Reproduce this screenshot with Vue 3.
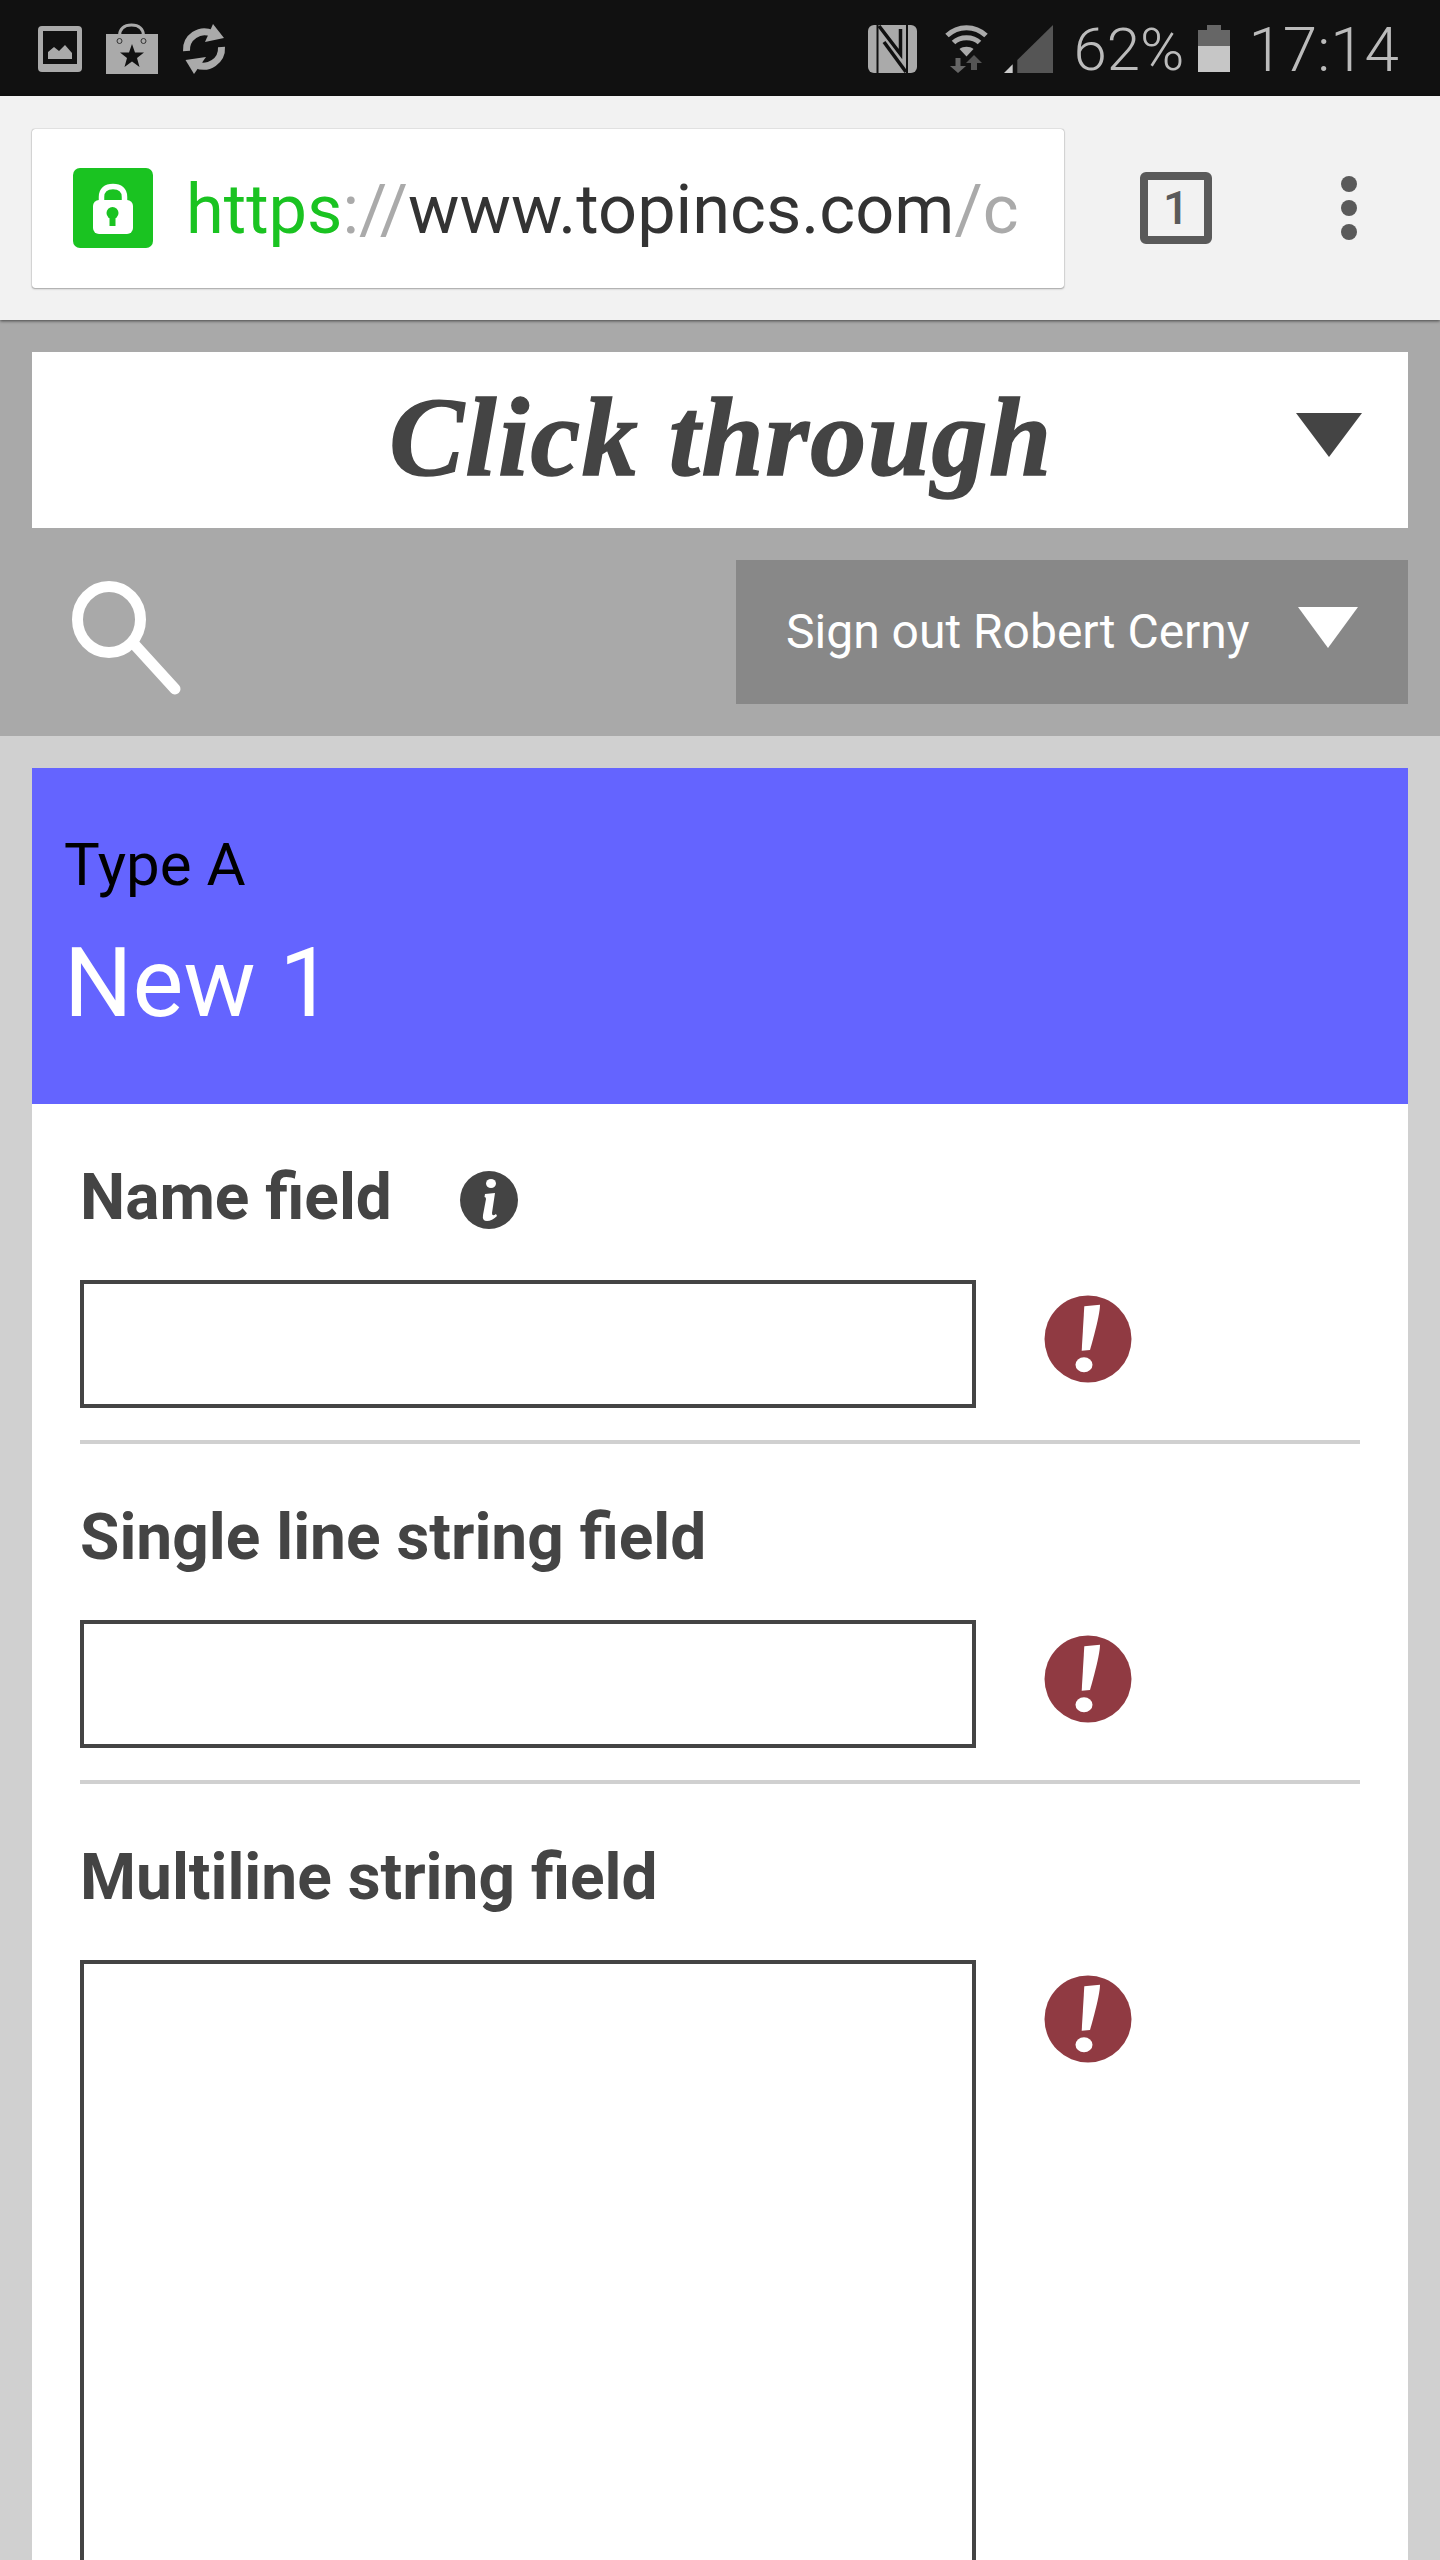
<template>
  <div class="page">
    <div class="statusbar">
      <svg class="st-image" width="44" height="46" viewBox="0 0 44 46">
        <path fill="#aaa" fill-rule="evenodd" d="M4 0H40a4 4 0 0 1 4 4V42a4 4 0 0 1-4 4H4a4 4 0 0 1-4-4V4a4 4 0 0 1 4-4ZM5 5V38H39V5Z" />
        <path fill="#aaa" d="M10 33V26L16 21L21 25L27 19L34 27V33Z" />
      </svg>
      <svg class="st-bag" width="52" height="52" viewBox="0 0 52 52">
        <rect x="0" y="11" width="52" height="40" fill="#aaa" />
        <path d="M13.500 18V13C13.500 6 18 2 25.500 2S37.500 6 37.500 13V18" fill="none" stroke="#aaa" stroke-width="3" />
        <circle cx="13.500" cy="18" r="2.500" fill="#aaa" stroke="#333" stroke-width="1" />
        <circle cx="37.500" cy="18" r="2.500" fill="#aaa" stroke="#333" stroke-width="1" />
        <path fill="#111" d="M26 21L29 29.500H38L31 35L33.500 44L26 38.500L18.500 44L21 35L14 29.500H23Z" />
      </svg>
      <svg class="st-sync" width="44" height="50" viewBox="0 0 44 50">
        <path d="M30 9.500A18 18 0 0 0 4.500 27" fill="none" stroke="#aaa" stroke-width="7" />
        <path d="M14 40.500A18 18 0 0 0 39.500 23" fill="none" stroke="#aaa" stroke-width="7" />
        <path fill="#aaa" d="M31 0L42 14L23 18Z" />
        <path fill="#aaa" d="M3.500 36L24 33L12 50Z" />
      </svg>
      <svg class="st-nfc" width="49" height="48" viewBox="0 0 49 48">
        <rect width="49" height="48" rx="6" fill="#aaa" />
        <path d="M9.500 0V48" stroke="#111" stroke-width="2" />
        <path d="M39 0V48" stroke="#111" stroke-width="2" />
        <path d="M11 1L32.500 29V4" fill="none" stroke="#111" stroke-width="3.500" />
        <path d="M16 17L38 47" fill="none" stroke="#111" stroke-width="3.500" />
      </svg>
      <svg class="st-wifi" width="43" height="49" viewBox="0 0 43 49">
        <path d="M2 11.500C13 1 30 1 41 11.500" fill="none" stroke="#aaa" stroke-width="5" />
        <path d="M8.500 18.500C15 12 28 12 34.500 18.500" fill="none" stroke="#aaa" stroke-width="5" />
        <path fill="#aaa" d="M14.500 25C18 22 25 22 28.500 25L21.500 32.500Z" />
        <path fill="#666" d="M10.500 34H15.500V42H21L13 49L5 42H10.500Z" />
        <path fill="#555" d="M29 31L37 39H32V46H26V39H21Z" />
      </svg>
      <svg class="st-signal" width="49" height="48" viewBox="0 0 49 48">
        <path fill="#ccc" d="M0 48L8.700 39.300V48Z" />
        <path fill="#555" d="M13.300 35L49 0V48H13.300Z" />
      </svg>
      <span class="st-pct">62%</span>
      <svg class="st-batt" width="32" height="47" viewBox="0 0 32 47">
        <rect x="9" width="14" height="6" fill="#666" />
        <rect y="5" width="32" height="16" fill="#666" />
        <rect y="21" width="32" height="26" fill="#c6c6c6" />
      </svg>
      <span class="st-time">17:14</span>
    </div>

    <div class="toolbar">
      <div class="urlbox">
        <svg class="lock" width="80" height="80" viewBox="0 0 80 80">
          <rect width="80" height="80" rx="7" fill="#1ac321" />
          <path d="M28.500 36V29C28.500 22 33 18.500 40 18.500S51.500 22 51.500 29V36" fill="none" stroke="#fff" stroke-width="5.500" />
          <rect x="20" y="32" width="40" height="34" rx="6" fill="#fff" />
          <circle cx="39.500" cy="45" r="6" fill="#1ac321" />
          <rect x="36.500" y="46" width="6" height="12" fill="#1ac321" />
        </svg>
        <div class="url"><span class="scheme">https</span><span class="dim">://</span><span class="host">www.topincs.com</span><span class="dim">/c</span></div>
      </div>
      <div class="tabs">1</div>
      <div class="dots"><i></i><i></i><i></i></div>
    </div>

    <div class="header">
      <div class="titlebar">
        <span class="title">Click through</span>
        <span class="tri dark"></span>
      </div>
      <div class="tools">
        <svg class="search" width="114" height="120" viewBox="0 0 114 120">
          <ellipse cx="39" cy="41.500" rx="31.500" ry="33" fill="none" stroke="#fff" stroke-width="11" />
          <path d="M64 66L105 111" fill="none" stroke="#fff" stroke-width="11" stroke-linecap="round" />
        </svg>
        <div class="signout">
          <span>Sign out Robert Cerny</span>
          <span class="tri light"></span>
        </div>
      </div>
    </div>

    <div class="content">
      <div class="card">
        <div class="card-head">
          <div class="type">Type A</div>
          <div class="name">New 1</div>
        </div>
        <div class="card-body">
          <div v-for="f in fields" :key="f.label" class="field" :class="{ multi: f.multi }">
            <div class="label">
              {{ f.label }}
              <svg v-if="f.info" class="info" width="58" height="58" viewBox="0 0 58 58">
                <circle cx="29" cy="29" r="29" fill="#444" />
                <ellipse cx="31" cy="12.500" rx="5" ry="4.500" fill="#fff" />
                <path fill="#fff" d="M25 23L35 22L32 42Q32 46 36 43L37 45Q32 50 27 50Q22 50 23 44L26 28Q26 26 24.500 26Z" />
              </svg>
            </div>
            <div class="row">
              <div class="input"></div>
              <svg class="error" width="88" height="88" viewBox="0 0 88 88">
                <circle cx="44" cy="44" r="43.500" fill="#903a42" />
                <path fill="#fff" d="M40.300 11.300L56 9.700Q56 20 46 55L37.700 55.700Z" />
                <ellipse cx="40" cy="69.700" rx="8.500" ry="7.500" fill="#fff" />
              </svg>
            </div>
          </div>
        </div>
      </div>
    </div>
  </div>
</template>

<script setup>
const fields = [
  { label: 'Name field', info: true },
  { label: 'Single line string field' },
  { label: 'Multiline string field', multi: true }
]
</script>

<style>
body {
  background: #d0d0d0;
}
</style>

<style scoped>
.page {
  width: 1440px;
  height: 2560px;
  overflow: hidden;
  background: #d0d0d0;
  font-family: Roboto, "Liberation Sans", sans-serif;
}

.statusbar {
  height: 96px;
  background: #111;
  display: flex;
  align-items: flex-start;
  color: #bbb;
  font-weight: 300;
}

.st-image { margin: 26px 0 0 38px; }
.st-bag { margin: 23px 0 0 24px; }
.st-sync { margin: 24px 0 0 24px; }
.st-nfc { margin: 25px 0 0 auto; }
.st-wifi { margin: 24px 0 0 28px; }
.st-signal { margin: 25px 0 0 16px; }
.st-batt { margin: 25px 0 0 14px; }

.st-pct,
.st-time {
  line-height: 96px;
  margin-top: 2px;
}

.st-pct {
  margin-left: 20px;
  font-size: 60px;
}

.st-time {
  margin: 2px 41px 0 18px;
  font-size: 62px;
}

.toolbar {
  height: 224px;
  background: #f2f2f2;
  display: flex;
  align-items: center;
  position: relative;
  box-shadow: 0 1px 3px rgba(0, 0, 0, 0.6);
}

.urlbox {
  width: 1032px;
  height: 159px;
  box-sizing: border-box;
  margin-left: 32px;
  background: #fff;
  border-radius: 3px;
  box-shadow: 0 0 1px rgba(0, 0, 0, 0.5), 0 1px 2px rgba(0, 0, 0, 0.3);
  display: flex;
  align-items: center;
  padding-left: 41px;
}

.lock { flex: none; }

.url {
  margin: 2px 0 0 33px;
  font-size: 68.5px;
  white-space: nowrap;
  color: #333;
}

.scheme { color: #1ac321; }
.dim { color: #aaa; }

.tabs {
  width: 72px;
  height: 72px;
  box-sizing: border-box;
  margin-left: 76px;
  border: 8px solid #5a5a5a;
  border-radius: 6px;
  color: #5a5a5a;
  font-size: 46px;
  font-weight: 500;
  line-height: 56px;
  text-align: center;
}

.dots {
  margin-left: 129px;
  display: flex;
  flex-direction: column;
  gap: 8px;
}

.dots i {
  display: block;
  width: 16px;
  height: 16px;
  border-radius: 50%;
  background: #5a5a5a;
}

.header {
  background: #a9a9a9;
  padding: 32px;
}

.titlebar {
  height: 176px;
  background: #fff;
  display: flex;
  align-items: center;
  position: relative;
  justify-content: center;
}

.title {
  font-family: "Liberation Serif", serif;
  font-weight: 700;
  font-style: italic;
  font-size: 112px;
  letter-spacing: 1.5px;
  color: #444;
  -webkit-text-stroke: 1.5px #444;
  margin: 0 0 6px 2px;
}

.tri {
  position: absolute;
  width: 0;
  height: 0;
  border-left-style: solid;
  border-right-style: solid;
  border-left-color: transparent;
  border-right-color: transparent;
}

.tri.dark {
  right: 46px;
  top: 61px;
  border-left-width: 33px;
  border-right-width: 33px;
  border-top: 44px solid #444;
}

.tools {
  margin-top: 32px;
  display: flex;
  justify-content: space-between;
}

.search {
  margin: 18px 0 0 38px;
}

.signout {
  position: relative;
  width: 672px;
  height: 144px;
  box-sizing: border-box;
  padding-left: 50px;
  background: #888;
  color: #fff;
  font-size: 48px;
  line-height: 144px;
}

.tri.light {
  right: 50px;
  top: 47px;
  border-left-width: 30px;
  border-right-width: 30px;
  border-top: 41px solid #fff;
}

.content {
  padding: 32px 32px 0;
}

.card {
  background: #fff;
}

.card-head {
  height: 336px;
  box-sizing: border-box;
  background: #6464ff;
  padding: 62px 32px 0;
}

.type {
  font-size: 60px;
  line-height: 70px;
  color: #000;
}

.name {
  font-size: 96px;
  line-height: 108px;
  margin-top: 29px;
  color: #fff;
}

.card-body {
  padding: 0 48px;
}

.field {
  padding: 56px 0 32px;
  border-bottom: 4px solid #d0d0d0;
}

.field.multi {
  border-bottom: none;
}

.label {
  height: 76px;
  margin-bottom: 44px;
  font-size: 64px;
  font-weight: 700;
  line-height: 80px;
  color: #444;
  display: flex;
  align-items: center;
  white-space: pre;
}

.info {
  margin: 4px 0 0 52px;
}

.row {
  display: flex;
  align-items: flex-start;
  gap: 68px;
}

.input {
  width: 896px;
  height: 128px;
  box-sizing: border-box;
  border: 4px solid #444;
  flex: none;
}

.multi .input {
  height: 800px;
}

.error {
  flex: none;
  margin-top: 15px;
}
</style>
